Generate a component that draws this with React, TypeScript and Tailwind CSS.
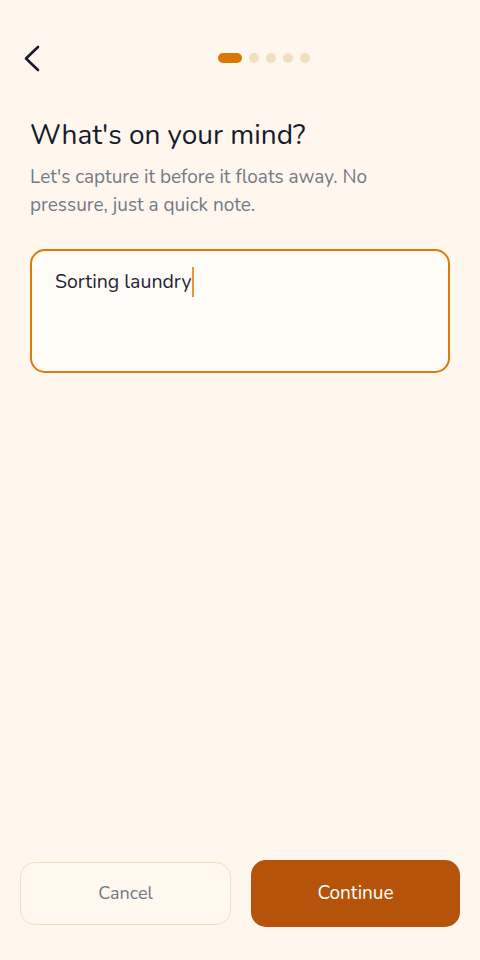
import React, { useState } from 'react';

const steps = [0, 1, 2, 3, 4];

function BackIcon() {
  return (
    <svg width="18" height="27" viewBox="0 0 18 27" fill="none">
      <path d="M15 2 L3 13.5 L15 25" stroke="#161b2b" strokeWidth="2.6" strokeLinecap="round" strokeLinejoin="round" />
    </svg>
  );
}

export default function App() {
  const [note, setNote] = useState('Sorting laundry');
  const current = 0;

  return (
    <div
      className="min-h-screen w-full bg-[#fff7ee] flex flex-col"
      style={{ fontFamily: 'Nunito, Lato, "Noto Sans", sans-serif' }}
    >
      {/* header */}
      <div className="flex items-center pl-[23px] pr-5 pt-[44px] h-[72px]">
        <button className="w-[45px] h-[28px] flex items-center">
          <BackIcon />
        </button>
        <div className="flex-1 flex justify-center items-center gap-[7px]">
          {steps.map(s =>
            s === current ? (
              <span key={s} className="w-6 h-[10px] rounded-full bg-[#d97706]" />
            ) : (
              <span key={s} className="w-[10px] h-[10px] rounded-full bg-[#f1dfc0]" />
            )
          )}
        </div>
      </div>

      <div className="px-[30px] pt-[45px]">
        <h1 className="text-[28px] leading-[36px] text-[#161b2b] font-normal">What's on your mind?</h1>
        <p className="mt-[10px] text-[19px] leading-[28px] text-[#737a87] pr-8">
          Let's capture it before it floats away. No pressure, just a quick note.
        </p>

        <div className="mt-[30px] h-[124px] rounded-[15px] border-2 border-[#dd7a0c] bg-[#fffcf7] px-[23px] pt-[16px]">
          <div className="flex items-center text-[19.5px] leading-[28px] text-[#1d2333]">
            <span>{note}</span>
            <span className="ml-[1px] w-[2px] h-[30px] bg-[#e8963e]" />
          </div>
        </div>
      </div>

      <div className="flex-1" />

      <div className="flex items-center gap-5 px-5 pb-[33px]">
        <button
          onClick={() => setNote('')}
          className="flex-1 h-[63px] rounded-[15px] border border-[#f2dfc0] bg-[#fff8ef] text-[18px] text-[#6f7684]"
        >
          Cancel
        </button>
        <button className="flex-1 h-[67px] rounded-[15px] bg-[#b5530a] text-[19px] text-white">
          Continue
        </button>
      </div>
    </div>
  );
}
